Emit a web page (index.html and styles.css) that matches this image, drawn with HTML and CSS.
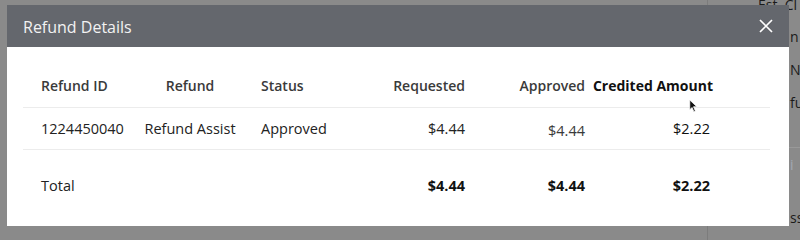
FILE: index.html
```html
<!DOCTYPE html>
<html>
<head>
<meta charset="utf-8">
<link rel="stylesheet" href="styles.css">
</head>
<body>
<div class="page">
  <div class="page-main"></div>
  <div class="page-side">
    <div class="side-item s1">Est. Cl</div>
    <div class="side-item s2">n</div>
    <div class="side-item s3">Ne</div>
    <div class="side-item s4">fu</div>
    <div class="side-rule"></div>
    <div class="side-item s5">i</div>
    <div class="side-item s6">ss</div>
  </div>
</div>

<div class="modal">
  <div class="modal-header">
    <span class="modal-title">Refund Details</span>
    <svg class="close" width="14" height="14" viewBox="0 0 14 14"><path d="M1 1 L13 13 M13 1 L1 13" stroke="#fff" stroke-width="1.7" fill="none"/></svg>
  </div>
  <div class="modal-body">
    <table class="grid">
      <colgroup>
        <col class="w1"><col class="w2"><col class="w3"><col class="w4"><col class="w5"><col class="w6">
      </colgroup>
      <thead>
        <tr class="head">
          <th class="c1">Refund ID</th>
          <th class="c2">Refund</th>
          <th class="c3">Status</th>
          <th class="c4">Requested</th>
          <th class="c5">Approved</th>
          <th class="c6 strong">Credited Amount</th>
        </tr>
      </thead>
      <tbody>
        <tr class="row">
          <td class="c1">1224450040</td>
          <td class="c2">Refund Assist</td>
          <td class="c3">Approved</td>
          <td class="c4">$4.44</td>
          <td class="c5 low">$4.44</td>
          <td class="c6 dark">$2.22</td>
        </tr>
        <tr class="total">
          <td class="c1">Total</td>
          <td class="c2"></td>
          <td class="c3"></td>
          <td class="c4 b">$4.44</td>
          <td class="c5 b">$4.44</td>
          <td class="c6 b">$2.22</td>
        </tr>
      </tbody>
    </table>
  </div>
  <svg class="cursor" width="9" height="14" viewBox="0 0 12 18"><path d="M1 1 L1 14 L4 11 L6.5 16.5 L8.5 15.5 L6 10 L10.5 10 Z" fill="#111" stroke="#fff" stroke-width="1"/></svg>
</div>
</body>
</html>
```
FILE: styles.css
```css
html, body {
  margin: 0;
  padding: 0;
}
body {
  width: 800px;
  height: 240px;
  overflow: hidden;
  background: #8a8a8a;
  font-family: "Open Sans", "Liberation Sans", sans-serif;
  position: relative;
}
.page {
  display: flex;
  height: 240px;
}
.page-main {
  width: 707px;
  border-right: 1px solid #7c7c7c;
}
.page-side {
  flex: 1;
  font-size: 14px;
  color: #1a1a1a;
  position: relative;
  overflow: hidden;
}
.side-item {
  position: absolute;
  left: 82px;
  white-space: nowrap;
  line-height: 18px;
}
.s1 { left: 50px; top: -4px; }
.s2 { top: 28px; }
.s3 { top: 61px; }
.s4 { top: 94px; }
.side-rule {
  position: absolute;
  left: 0;
  right: 0;
  top: 147px;
  border-top: 1px solid #999;
}
.s5 { top: 156px; color: #a3a8b3; }
.s6 { top: 209px; }

.modal {
  position: absolute;
  left: 7px;
  top: 5px;
  width: 782px;
  height: 221px;
  background: #fff;
  display: flex;
  flex-direction: column;
}
.modal-header {
  height: 42px;
  background: #64676d;
  display: flex;
  align-items: center;
  justify-content: space-between;
  padding: 0 16px 0 16px;
  box-sizing: border-box;
}
.modal-title {
  color: #f2f2f2;
  font-size: 16px;
  margin-top: 1px;
}
.close {
  display: block;
  margin-top: -1px;
}
.modal-body {
  padding: 18px 19px 0 16px;
}
.grid {
  width: 747px;
  border-collapse: collapse;
  table-layout: fixed;
  font-size: 14.5px;
  color: #222;
}
.w1 { width: 112px; }
.w2 { width: 110px; }
.w3 { width: 95px; }
.w4 { width: 140px; }
.w5 { width: 105px; }
.w6 { width: 185px; }
th, td {
  padding: 0;
  white-space: nowrap;
}
.head { height: 42px; }
th {
  font-size: 14px;
  font-weight: 600;
  color: #3a3a3a;
  border-bottom: 1px solid #ececec;
}
th.strong {
  color: #111;
  font-weight: 700;
}
.row { height: 42px; }
.row td {
  border-bottom: 1px solid #ececec;
}
.total { height: 72px; }
.c1 { text-align: left; padding-left: 18px; }
.c2 { text-align: center; }
.c3 { text-align: left; padding-left: 16px; }
.c4 { text-align: right; padding-right: 15px; }
.c5 { text-align: right; padding-right: 0; }
.c6 { text-align: right; padding-right: 60px; }
th.c6 { padding-right: 57px; }
td.low { padding-top: 4px; color: #3a3a3a; }
td.dark { color: #111; }
td.b { font-weight: 700; color: #111; }
.cursor {
  position: absolute;
  left: 682px;
  top: 94px;
}
```
